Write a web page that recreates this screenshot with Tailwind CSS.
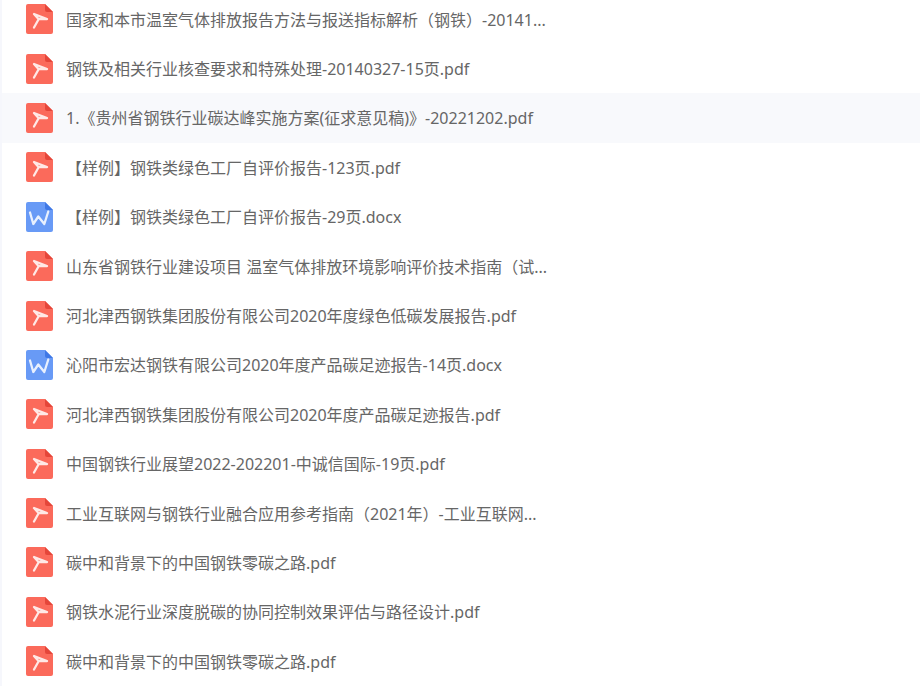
<!DOCTYPE html>
<html lang="en">
  <head>
    <meta charset="UTF-8" />
    <title>文件列表</title>
    <script src="https://cdn.jsdelivr.net/npm/@tailwindcss/browser@4"></script>
  </head>
  <body class="bg-white overflow-hidden">
    <div class="h-[686px] overflow-hidden border-l-2 border-[#f6f7fc] font-['Noto_Sans','Noto_Sans_CJK_SC',sans-serif] text-base text-[#666666]">
      <ul class="-mt-[5.5px]">
        <li class="h-[49.4px] flex items-center pl-6 gap-[13px]">
          <svg class="w-[27px] h-[30px] shrink-0" viewBox="0 0 27 30"><path d="M2 0H19L27 8V28a2 2 0 0 1-2 2H2a2 2 0 0 1-2-2V2a2 2 0 0 1 2-2Z" fill="#fb6a5b"/><path d="M19 0L27 8H21a2 2 0 0 1-2-2Z" fill="#e5463a"/><path d="M8 10L21 15H12.500ZM12.500 15.500L8 23.500" fill="none" stroke="#fff" stroke-width="2.300" stroke-linecap="round" stroke-linejoin="round" stroke-opacity=".85"/></svg>
          <span class="pt-[1px]">国家和本市温室气体排放报告方法与报送指标解析（钢铁）-20141...</span>
        </li>
        <li class="h-[49.4px] flex items-center pl-6 gap-[13px]">
          <svg class="w-[27px] h-[30px] shrink-0" viewBox="0 0 27 30"><path d="M2 0H19L27 8V28a2 2 0 0 1-2 2H2a2 2 0 0 1-2-2V2a2 2 0 0 1 2-2Z" fill="#fb6a5b"/><path d="M19 0L27 8H21a2 2 0 0 1-2-2Z" fill="#e5463a"/><path d="M8 10L21 15H12.500ZM12.500 15.500L8 23.500" fill="none" stroke="#fff" stroke-width="2.300" stroke-linecap="round" stroke-linejoin="round" stroke-opacity=".85"/></svg>
          <span class="pt-[1px]">钢铁及相关行业核查要求和特殊处理-20140327-15页.pdf</span>
        </li>
        <li class="h-[49.4px] flex items-center pl-6 gap-[13px] bg-[#f8f9fc]">
          <svg class="w-[27px] h-[30px] shrink-0" viewBox="0 0 27 30"><path d="M2 0H19L27 8V28a2 2 0 0 1-2 2H2a2 2 0 0 1-2-2V2a2 2 0 0 1 2-2Z" fill="#fb6a5b"/><path d="M19 0L27 8H21a2 2 0 0 1-2-2Z" fill="#e5463a"/><path d="M8 10L21 15H12.500ZM12.500 15.500L8 23.500" fill="none" stroke="#fff" stroke-width="2.300" stroke-linecap="round" stroke-linejoin="round" stroke-opacity=".85"/></svg>
          <span class="pt-[1px]">1.《贵州省钢铁行业碳达峰实施方案(征求意见稿)》-20221202.pdf</span>
        </li>
        <li class="h-[49.4px] flex items-center pl-6 gap-[13px]">
          <svg class="w-[27px] h-[30px] shrink-0" viewBox="0 0 27 30"><path d="M2 0H19L27 8V28a2 2 0 0 1-2 2H2a2 2 0 0 1-2-2V2a2 2 0 0 1 2-2Z" fill="#fb6a5b"/><path d="M19 0L27 8H21a2 2 0 0 1-2-2Z" fill="#e5463a"/><path d="M8 10L21 15H12.500ZM12.500 15.500L8 23.500" fill="none" stroke="#fff" stroke-width="2.300" stroke-linecap="round" stroke-linejoin="round" stroke-opacity=".85"/></svg>
          <span class="pt-[1px]">【样例】钢铁类绿色工厂自评价报告-123页.pdf</span>
        </li>
        <li class="h-[49.4px] flex items-center pl-6 gap-[13px]">
          <svg class="w-[27px] h-[30px] shrink-0" viewBox="0 0 27 30"><path d="M2 0H19L27 8V28a2 2 0 0 1-2 2H2a2 2 0 0 1-2-2V2a2 2 0 0 1 2-2Z" fill="#689af6"/><path d="M19 0L27 8H21a2 2 0 0 1-2-2Z" fill="#3f78e6"/><path d="M4 10.500L7.300 22L12.300 14.500L18.300 22L22.300 9.500" fill="none" stroke="#fff" stroke-width="2.300" stroke-linejoin="round" stroke-linecap="round" stroke-opacity=".85"/></svg>
          <span class="pt-[1px]">【样例】钢铁类绿色工厂自评价报告-29页.docx</span>
        </li>
        <li class="h-[49.4px] flex items-center pl-6 gap-[13px]">
          <svg class="w-[27px] h-[30px] shrink-0" viewBox="0 0 27 30"><path d="M2 0H19L27 8V28a2 2 0 0 1-2 2H2a2 2 0 0 1-2-2V2a2 2 0 0 1 2-2Z" fill="#fb6a5b"/><path d="M19 0L27 8H21a2 2 0 0 1-2-2Z" fill="#e5463a"/><path d="M8 10L21 15H12.500ZM12.500 15.500L8 23.500" fill="none" stroke="#fff" stroke-width="2.300" stroke-linecap="round" stroke-linejoin="round" stroke-opacity=".85"/></svg>
          <span class="pt-[1px]">山东省钢铁行业建设项目 温室气体排放环境影响评价技术指南（试...</span>
        </li>
        <li class="h-[49.4px] flex items-center pl-6 gap-[13px]">
          <svg class="w-[27px] h-[30px] shrink-0" viewBox="0 0 27 30"><path d="M2 0H19L27 8V28a2 2 0 0 1-2 2H2a2 2 0 0 1-2-2V2a2 2 0 0 1 2-2Z" fill="#fb6a5b"/><path d="M19 0L27 8H21a2 2 0 0 1-2-2Z" fill="#e5463a"/><path d="M8 10L21 15H12.500ZM12.500 15.500L8 23.500" fill="none" stroke="#fff" stroke-width="2.300" stroke-linecap="round" stroke-linejoin="round" stroke-opacity=".85"/></svg>
          <span class="pt-[1px]">河北津西钢铁集团股份有限公司2020年度绿色低碳发展报告.pdf</span>
        </li>
        <li class="h-[49.4px] flex items-center pl-6 gap-[13px]">
          <svg class="w-[27px] h-[30px] shrink-0" viewBox="0 0 27 30"><path d="M2 0H19L27 8V28a2 2 0 0 1-2 2H2a2 2 0 0 1-2-2V2a2 2 0 0 1 2-2Z" fill="#689af6"/><path d="M19 0L27 8H21a2 2 0 0 1-2-2Z" fill="#3f78e6"/><path d="M4 10.500L7.300 22L12.300 14.500L18.300 22L22.300 9.500" fill="none" stroke="#fff" stroke-width="2.300" stroke-linejoin="round" stroke-linecap="round" stroke-opacity=".85"/></svg>
          <span class="pt-[1px]">沁阳市宏达钢铁有限公司2020年度产品碳足迹报告-14页.docx</span>
        </li>
        <li class="h-[49.4px] flex items-center pl-6 gap-[13px]">
          <svg class="w-[27px] h-[30px] shrink-0" viewBox="0 0 27 30"><path d="M2 0H19L27 8V28a2 2 0 0 1-2 2H2a2 2 0 0 1-2-2V2a2 2 0 0 1 2-2Z" fill="#fb6a5b"/><path d="M19 0L27 8H21a2 2 0 0 1-2-2Z" fill="#e5463a"/><path d="M8 10L21 15H12.500ZM12.500 15.500L8 23.500" fill="none" stroke="#fff" stroke-width="2.300" stroke-linecap="round" stroke-linejoin="round" stroke-opacity=".85"/></svg>
          <span class="pt-[1px]">河北津西钢铁集团股份有限公司2020年度产品碳足迹报告.pdf</span>
        </li>
        <li class="h-[49.4px] flex items-center pl-6 gap-[13px]">
          <svg class="w-[27px] h-[30px] shrink-0" viewBox="0 0 27 30"><path d="M2 0H19L27 8V28a2 2 0 0 1-2 2H2a2 2 0 0 1-2-2V2a2 2 0 0 1 2-2Z" fill="#fb6a5b"/><path d="M19 0L27 8H21a2 2 0 0 1-2-2Z" fill="#e5463a"/><path d="M8 10L21 15H12.500ZM12.500 15.500L8 23.500" fill="none" stroke="#fff" stroke-width="2.300" stroke-linecap="round" stroke-linejoin="round" stroke-opacity=".85"/></svg>
          <span class="pt-[1px]">中国钢铁行业展望2022-202201-中诚信国际-19页.pdf</span>
        </li>
        <li class="h-[49.4px] flex items-center pl-6 gap-[13px]">
          <svg class="w-[27px] h-[30px] shrink-0" viewBox="0 0 27 30"><path d="M2 0H19L27 8V28a2 2 0 0 1-2 2H2a2 2 0 0 1-2-2V2a2 2 0 0 1 2-2Z" fill="#fb6a5b"/><path d="M19 0L27 8H21a2 2 0 0 1-2-2Z" fill="#e5463a"/><path d="M8 10L21 15H12.500ZM12.500 15.500L8 23.500" fill="none" stroke="#fff" stroke-width="2.300" stroke-linecap="round" stroke-linejoin="round" stroke-opacity=".85"/></svg>
          <span class="pt-[1px]">工业互联网与钢铁行业融合应用参考指南（2021年）-工业互联网...</span>
        </li>
        <li class="h-[49.4px] flex items-center pl-6 gap-[13px]">
          <svg class="w-[27px] h-[30px] shrink-0" viewBox="0 0 27 30"><path d="M2 0H19L27 8V28a2 2 0 0 1-2 2H2a2 2 0 0 1-2-2V2a2 2 0 0 1 2-2Z" fill="#fb6a5b"/><path d="M19 0L27 8H21a2 2 0 0 1-2-2Z" fill="#e5463a"/><path d="M8 10L21 15H12.500ZM12.500 15.500L8 23.500" fill="none" stroke="#fff" stroke-width="2.300" stroke-linecap="round" stroke-linejoin="round" stroke-opacity=".85"/></svg>
          <span class="pt-[1px]">碳中和背景下的中国钢铁零碳之路.pdf</span>
        </li>
        <li class="h-[49.4px] flex items-center pl-6 gap-[13px]">
          <svg class="w-[27px] h-[30px] shrink-0" viewBox="0 0 27 30"><path d="M2 0H19L27 8V28a2 2 0 0 1-2 2H2a2 2 0 0 1-2-2V2a2 2 0 0 1 2-2Z" fill="#fb6a5b"/><path d="M19 0L27 8H21a2 2 0 0 1-2-2Z" fill="#e5463a"/><path d="M8 10L21 15H12.500ZM12.500 15.500L8 23.500" fill="none" stroke="#fff" stroke-width="2.300" stroke-linecap="round" stroke-linejoin="round" stroke-opacity=".85"/></svg>
          <span class="pt-[1px]">钢铁水泥行业深度脱碳的协同控制效果评估与路径设计.pdf</span>
        </li>
        <li class="h-[49.4px] flex items-center pl-6 gap-[13px]">
          <svg class="w-[27px] h-[30px] shrink-0" viewBox="0 0 27 30"><path d="M2 0H19L27 8V28a2 2 0 0 1-2 2H2a2 2 0 0 1-2-2V2a2 2 0 0 1 2-2Z" fill="#fb6a5b"/><path d="M19 0L27 8H21a2 2 0 0 1-2-2Z" fill="#e5463a"/><path d="M8 10L21 15H12.500ZM12.500 15.500L8 23.500" fill="none" stroke="#fff" stroke-width="2.300" stroke-linecap="round" stroke-linejoin="round" stroke-opacity=".85"/></svg>
          <span class="pt-[1px]">碳中和背景下的中国钢铁零碳之路.pdf</span>
        </li>
      </ul>
    </div>
  </body>
</html>
